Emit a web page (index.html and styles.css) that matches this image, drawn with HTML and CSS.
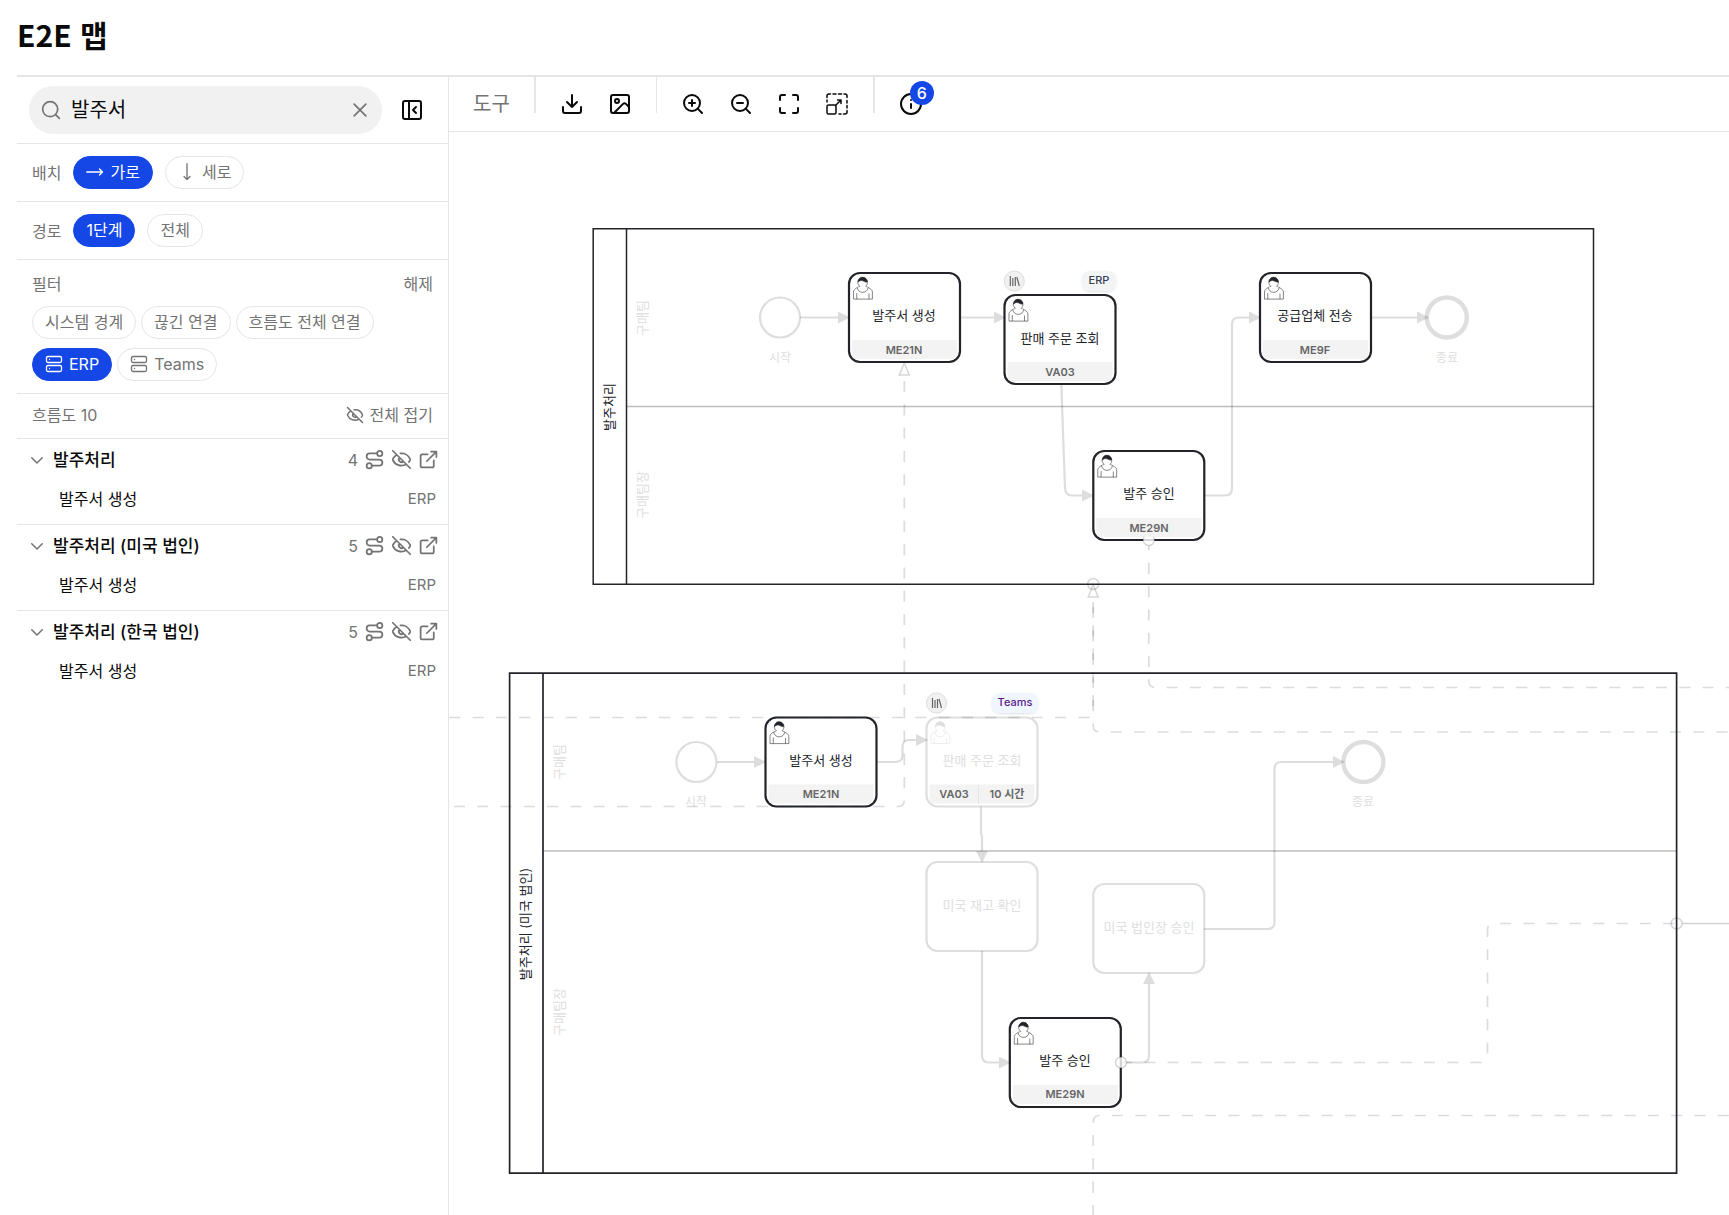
FILE: index.html
```html
<!DOCTYPE html>
<html lang="ko">
<head>
<meta charset="utf-8">
<title>E2E 맵</title>
<meta name="viewport" content="width=device-width, initial-scale=1">
<link rel="stylesheet" href="styles.css">
</head>
<body>
<svg class="sprite" aria-hidden="true">
  <symbol id="i-search" viewBox="0 0 24 24"><circle cx="11" cy="11" r="9"/><path d="m22 22-4.500-4.500"/></symbol>
  <symbol id="i-x" viewBox="0 0 24 24"><path d="M19 5 5 19M5 5l14 14"/></symbol>
  <symbol id="i-panel" viewBox="0 0 24 24"><rect x="3" y="3" width="18" height="18" rx="2"/><path d="M9 3v18M16 15l-3-3 3-3"/></symbol>
  <symbol id="i-right" viewBox="0 0 24 24"><path d="m18 8 4 4-4 4M1 12h21"/></symbol>
  <symbol id="i-down" viewBox="0 0 24 24"><path d="m8 18 4 4 4-4M12 1v21"/></symbol>
  <symbol id="i-server" viewBox="0 0 24 24"><rect x="2" y="2" width="20" height="8" rx="2"/><rect x="2" y="14" width="20" height="8" rx="2"/><path d="M6 6h.01M6 18h.01"/></symbol>
  <symbol id="i-eyeoff" viewBox="0 0 24 24"><path d="M10.733 5.076a10.744 10.744 0 0 1 11.205 6.575 1 1 0 0 1 0 .696 10.747 10.747 0 0 1-1.444 2.49M14.084 14.158a3 3 0 0 1-4.242-4.242M17.479 17.499a10.75 10.75 0 0 1-15.417-5.151 1 1 0 0 1 0-.696 10.75 10.75 0 0 1 4.446-5.143M2 2l20 20"/></symbol>
  <symbol id="i-route" viewBox="0 0 24 24"><circle cx="6" cy="19" r="3"/><path d="M9 19h8.500a3.500 3.500 0 0 0 0-7h-11a3.500 3.500 0 0 1 0-7H15"/><circle cx="18" cy="5" r="3"/></symbol>
  <symbol id="i-external" viewBox="0 0 24 24"><path d="M15 3h6v6M10 14 21 3M18 13v6a2 2 0 0 1-2 2H5a2 2 0 0 1-2-2V8a2 2 0 0 1 2-2h6"/></symbol>
  <symbol id="i-chevron" viewBox="0 0 24 24"><path d="m5 9 7 7 7-7"/></symbol>
  <symbol id="i-download" viewBox="0 0 24 24"><path d="M12 15V3M21 15v4a2 2 0 0 1-2 2H5a2 2 0 0 1-2-2v-4M7 10l5 5 5-5"/></symbol>
  <symbol id="i-image" viewBox="0 0 24 24"><rect x="3" y="3" width="18" height="18" rx="2"/><circle cx="9" cy="9" r="2"/><path d="m21 15-3.086-3.086a2 2 0 0 0-2.828 0L6 21"/></symbol>
  <symbol id="i-zoomin" viewBox="0 0 24 24"><circle cx="11" cy="11" r="8"/><path d="m21 21-4.350-4.350M11 8v6M8 11h6"/></symbol>
  <symbol id="i-zoomout" viewBox="0 0 24 24"><circle cx="11" cy="11" r="8"/><path d="m21 21-4.350-4.350M8 11h6"/></symbol>
  <symbol id="i-max" viewBox="0 0 24 24"><path d="M8 3H5a2 2 0 0 0-2 2v3M21 8V5a2 2 0 0 0-2-2h-3M3 16v3a2 2 0 0 0 2 2h3M16 21h3a2 2 0 0 0 2-2v-3"/></symbol>
  <symbol id="i-scale" viewBox="0 0 24 24"><rect x="2" y="13" width="9" height="9" rx="1.500"/><path d="M10.500 13.500 16 8M12.500 8H16v3.500M2 10V8M2 5.500V4a2 2 0 0 1 2-2h1.500M8 2h3M13.500 2h3M19 2h1a2 2 0 0 1 2 2v1.500M22 8.500v2.500M22 13.500v2.500M22 18.500V20a2 2 0 0 1-2 2h-1.500M14 22h2"/></symbol>
  <symbol id="i-info" viewBox="0 0 24 24"><circle cx="12" cy="12" r="10"/><path d="M12 16v-4M12 8h.01"/></symbol>
  <g id="user">
    <g transform="scale(1.111)">
      <path class="user-line" d="m15 12c.909-.845 1.594-2.049 1.594-3.385 0-2.554-1.805-4.622-4.357-4.622-2.552 0-4.288 2.068-4.288 4.622 0 1.348.974 2.562 1.896 3.405-.529.187-5.669 2.097-5.794 4.756v6.718h17v-6.718c0-2.298-5.528-4.595-6.051-4.776zm-8 6v5.500m11 0v-5"/>
      <path class="user-line" d="m17.162 13.009c0 2.447-2.158 4.431-4.821 4.431-2.665 0-4.822-1.981-4.822-4.431"/>
      <path class="user-hair" d="m8.100 8.200c0 0 2.251-2.358 4.274-1.177 2.024 1.181 4.221 1.537 4.124.965-.098-.57-.117-3.791-4.191-4.136-3.572-.22-4.207 3.658-4.207 4.348z"/>
    </g>
  </g>
  <g id="task">
    <rect class="task-box" width="111" height="89" rx="11"/>
    <use href="#user"/>
    <path class="task-foot" d="M3 67h105v14q0 5-5 5H8q-5 0-5-5z"/>
  </g>
  <g id="library">
    <circle class="lib-bg" r="10"/>
    <path class="lib-mark" d="M-4-5V5M-1.500-3V5M1-4V5M2.500-4 5 5"/>
  </g>
  <path id="msg-head" class="msg-mark" d="M0 0 5 12H-5z"/>
</svg>

<header class="page-header"><h1>E2E 맵</h1></header>

<div class="workspace">
  <aside class="sidebar">
    <div class="search-row">
      <label class="search">
        <svg class="icon icon-md"><use href="#i-search"/></svg>
        <input type="text" value="발주서" aria-label="검색">
        <button type="button" class="plain" aria-label="지우기"><svg class="icon icon-md"><use href="#i-x"/></svg></button>
      </label>
      <button type="button" class="icon-btn" aria-label="패널 접기"><svg class="icon icon-lg"><use href="#i-panel"/></svg></button>
    </div>

    <div class="option-row">
      <span class="label">배치</span>
      <button type="button" class="chip on"><svg class="icon icon-sm"><use href="#i-right"/></svg>가로</button>
      <button type="button" class="chip"><svg class="icon icon-sm"><use href="#i-down"/></svg>세로</button>
    </div>
    <div class="option-row">
      <span class="label">경로</span>
      <button type="button" class="chip on">1단계</button>
      <button type="button" class="chip">전체</button>
    </div>

    <div class="filters">
      <div class="filter-head"><span>필터</span><button type="button" class="plain">해제</button></div>
      <div class="chips">
        <button type="button" class="chip">시스템 경계</button>
        <button type="button" class="chip">끊긴 연결</button>
        <button type="button" class="chip">흐름도 전체 연결</button>
        <button type="button" class="chip on"><svg class="icon icon-sm"><use href="#i-server"/></svg>ERP</button>
        <button type="button" class="chip"><svg class="icon icon-sm"><use href="#i-server"/></svg>Teams</button>
      </div>
    </div>

    <div class="count-row">
      <span>흐름도 10</span>
      <button type="button" class="plain"><svg class="icon icon-sm"><use href="#i-eyeoff"/></svg>전체 접기</button>
    </div>

    <ul class="flows">
      <li>
        <div class="flow-head">
          <button type="button" class="flow-name"><svg class="icon icon-sm"><use href="#i-chevron"/></svg>발주처리</button>
          <span>4</span>
          <button type="button" class="plain" aria-label="경로"><svg class="icon icon-act"><use href="#i-route"/></svg></button>
          <button type="button" class="plain" aria-label="숨기기"><svg class="icon icon-act"><use href="#i-eyeoff"/></svg></button>
          <button type="button" class="plain" aria-label="열기"><svg class="icon icon-act"><use href="#i-external"/></svg></button>
        </div>
        <button type="button" class="flow-item">발주서 생성<span>ERP</span></button>
      </li>
      <li>
        <div class="flow-head">
          <button type="button" class="flow-name"><svg class="icon icon-sm"><use href="#i-chevron"/></svg>발주처리 (미국 법인)</button>
          <span>5</span>
          <button type="button" class="plain" aria-label="경로"><svg class="icon icon-act"><use href="#i-route"/></svg></button>
          <button type="button" class="plain" aria-label="숨기기"><svg class="icon icon-act"><use href="#i-eyeoff"/></svg></button>
          <button type="button" class="plain" aria-label="열기"><svg class="icon icon-act"><use href="#i-external"/></svg></button>
        </div>
        <button type="button" class="flow-item">발주서 생성<span>ERP</span></button>
      </li>
      <li>
        <div class="flow-head">
          <button type="button" class="flow-name"><svg class="icon icon-sm"><use href="#i-chevron"/></svg>발주처리 (한국 법인)</button>
          <span>5</span>
          <button type="button" class="plain" aria-label="경로"><svg class="icon icon-act"><use href="#i-route"/></svg></button>
          <button type="button" class="plain" aria-label="숨기기"><svg class="icon icon-act"><use href="#i-eyeoff"/></svg></button>
          <button type="button" class="plain" aria-label="열기"><svg class="icon icon-act"><use href="#i-external"/></svg></button>
        </div>
        <button type="button" class="flow-item">발주서 생성<span>ERP</span></button>
      </li>
    </ul>
  </aside>

  <main class="stage">
    <div class="toolbar">
      <span class="toolbar-label">도구</span>
      <span class="divider strong"></span>
      <button type="button" class="icon-btn" aria-label="다운로드"><svg class="icon icon-lg"><use href="#i-download"/></svg></button>
      <button type="button" class="icon-btn" aria-label="이미지"><svg class="icon icon-lg"><use href="#i-image"/></svg></button>
      <span class="divider"></span>
      <button type="button" class="icon-btn" aria-label="확대"><svg class="icon icon-lg"><use href="#i-zoomin"/></svg></button>
      <button type="button" class="icon-btn" aria-label="축소"><svg class="icon icon-lg"><use href="#i-zoomout"/></svg></button>
      <button type="button" class="icon-btn" aria-label="전체 화면"><svg class="icon icon-lg"><use href="#i-max"/></svg></button>
      <button type="button" class="icon-btn" aria-label="화면에 맞춤"><svg class="icon icon-lg thin"><use href="#i-scale"/></svg></button>
      <span class="divider strong"></span>
      <button type="button" class="icon-btn" aria-label="정보"><svg class="icon icon-lg"><use href="#i-info"/></svg><span class="badge">6</span></button>
    </div>

    <svg class="canvas" role="img" aria-label="프로세스 흐름도">
      <defs>
        <marker id="arrow" viewBox="0 0 12 12" refX="11" refY="6" markerWidth="12" markerHeight="12" markerUnits="userSpaceOnUse" orient="auto"><path d="M0 0 12 6 0 12z" fill="#22242a"/></marker>
        <filter id="shadow" x="-20%" y="-20%" width="140%" height="150%"><feDropShadow dx="0" dy="1" stdDeviation="1" flood-opacity=".12"/></filter>
      </defs>
      <g transform="translate(-449 -132)">

        <!-- pool: 발주처리 -->
        <path class="lane" d="M627 406.500H1593"/>
        <path class="pool thin-pool" d="M593.200 228.700H1593.500V584.200H593.200zM626.500 228.700V584.200"/>
        <text class="t pool-name" transform="translate(614 407) rotate(-90)">발주처리</text>
        <text class="t dim" transform="translate(647 318) rotate(-90)">구매팀</text>
        <text class="t dim" transform="translate(647 495) rotate(-90)">구매팀장</text>

        <!-- pool: 발주처리 (미국 법인) -->
        <path class="lane" d="M543 851H1676"/>
        <path class="pool" d="M509.600 673.200H1676.600V1173.200H509.600zM543 673.200V1173.200"/>
        <text class="t pool-name" transform="translate(530 924) rotate(-90)">발주처리 (미국 법인)</text>
        <text class="t dim" transform="translate(564 762) rotate(-90)">구매팀</text>
        <text class="t dim" transform="translate(564 1012) rotate(-90)">구매팀장</text>

        <!-- events -->
        <circle class="event" cx="780" cy="317.500" r="20"/>
        <circle class="event end" cx="1446.800" cy="317.500" r="20"/>
        <circle class="event" cx="696.400" cy="762" r="20"/>
        <circle class="event end" cx="1363.400" cy="762" r="20"/>
        <text class="t small dim" x="780" y="362">시작</text>
        <text class="t small dim" x="1447" y="362">종료</text>
        <text class="t small dim" x="696" y="806">시작</text>
        <text class="t small dim" x="1363" y="806">종료</text>

        <!-- tasks -->
        <use href="#task" x="849" y="273"/>
        <text class="t" x="904" y="320">발주서 생성</text><text class="t code" x="904" y="354">ME21N</text>
        <use href="#task" x="1004.500" y="295"/>
        <text class="t" x="1060" y="343">판매 주문 조회</text><text class="t code" x="1060" y="376">VA03</text>
        <use href="#task" x="1093.300" y="451"/>
        <text class="t" x="1149" y="498">발주 승인</text><text class="t code" x="1149" y="532">ME29N</text>
        <use href="#task" x="1260" y="273"/>
        <text class="t" x="1315" y="320">공급업체 전송</text><text class="t code" x="1315" y="354">ME9F</text>
        <use href="#task" x="765.500" y="717.500"/>
        <text class="t" x="821" y="765">발주서 생성</text><text class="t code" x="821" y="798">ME21N</text>
        <use href="#task" x="1009.800" y="1018"/>
        <text class="t" x="1065" y="1065">발주 승인</text><text class="t code" x="1065" y="1098">ME29N</text>

        <g class="faded">
          <use href="#task" x="926.500" y="717.500"/>
          <rect class="task-box" x="926.500" y="862" width="111" height="89" rx="11"/>
          <rect class="task-box" x="1093.300" y="884" width="111" height="89" rx="11"/>
        </g>
        <path class="foot-split" d="M978.500 785v19"/>
        <text class="t dim" x="982" y="765">판매 주문 조회</text>
        <text class="t code" x="954" y="798">VA03</text><text class="t code" x="1007" y="798">10 시간</text>
        <text class="t dim" x="982" y="910">미국 재고 확인</text>
        <text class="t dim" x="1149" y="932">미국 법인장 승인</text>

        <!-- badges -->
        <use href="#library" x="1014.300" y="281"/>
        <rect class="tag" x="1082" y="271" width="34" height="20" rx="8"/><text class="t tag-text" x="1099" y="284">ERP</text>
        <use href="#library" x="936.500" y="703"/>
        <rect class="tag teams" x="992" y="693" width="46" height="20" rx="8"/><text class="t tag-text teams-text" x="1015" y="706">Teams</text>

        <!-- sequence flows -->
        <g class="seq">
          <path d="M800 317.500H849"/>
          <path d="M960 317.500H1005"/>
          <path d="M1061.300 384 1065 488q.500 7.500 7 7.500H1093"/>
          <path d="M1205 495.500h20q7 0 7-7V324.500q0-7 7-7H1260"/>
          <path d="M1371 317.500H1428"/>
          <path d="M717 762H765"/>
          <path d="M876.500 762H895.500q7 0 7-7V747q0-7 7-7H927"/>
          <path d="M981 806.500V834L982 836V862"/>
          <path d="M982 951V1055.500q0 7 7 7H1010"/>
          <path d="M1121 1062.500h21q7 0 7-7V973"/>
          <path d="M1204 929h63.500q7 0 7-7V769q0-7 7-7H1344"/>
        </g>

        <!-- message flows -->
        <g class="msg">
          <path d="M904.300 381V800q0 6.500-6.500 6.500H449"/>
          <path d="M1093.200 602V711q0 6.500-6.500 6.500H449"/>
          <path d="M1093.200 607V725.500q0 6.500 6.500 6.500H2600"/>
          <path d="M1148.800 539.500V681q0 6.500 6.500 6.500H2600"/>
          <path d="M1121 1062.500H1481q6.500 0 6.500-6.500V930q0-6.500 6.500-6.500H1676"/>
          <path d="M1093.200 1216V1122q0-6.500 6.500-6.500H2600"/>
        </g>
        <path class="msg-solid" d="M1682 923.500H2600"/>
        <use href="#msg-head" x="904.300" y="363"/>
        <use href="#msg-head" x="1093.200" y="585"/>
        <circle class="msg-mark" cx="1093.200" cy="584" r="5.500"/>
        <path class="msg-mark cover" d="M1144.200 537a5.500 5.500 0 1 0 9.200 0"/>
        <circle class="msg-mark cover" cx="1121" cy="1062.500" r="5.500"/>
        <circle class="msg-mark" cx="1676.600" cy="923.500" r="5.500"/>
      </g>
    </svg>
  </main>
</div>
</body>
</html>
```
FILE: styles.css
```css
:root {
  --line: #e5e5e5;
  --muted: #737373;
  --ink: #0a0a0a;
  --blue: #1447e6;
  --shape: #22242a;
}

* { box-sizing: border-box; }

body {
  margin: 0;
  min-height: 100vh;
  display: flex;
  flex-direction: column;
  background: #fff;
  color: var(--ink);
  font: 16px/24px Inter, "Noto Sans CJK KR", sans-serif;
}

button {
  font: inherit;
  color: inherit;
  background: none;
  border: 0;
  padding: 0;
  cursor: pointer;
}

.sprite { position: absolute; width: 0; height: 0; }

.page-header {
  margin-left: 17px;
  padding: 14px 0 21px;
  border-bottom: 2px solid var(--line);
}

h1 {
  margin: 0;
  font: 700 30px/40px "Noto Sans CJK KR", sans-serif;
}

.workspace { flex: 1; display: flex; margin-left: 17px; }

.sidebar {
  flex: 0 0 432px;
  min-width: 0;
  border-right: 1px solid var(--line);
  color: var(--muted);
}

.icon {
  display: block;
  flex: none;
  fill: none;
  stroke: currentColor;
  stroke-width: 2;
  stroke-linecap: round;
  stroke-linejoin: round;
}
.icon-sm { width: 18px; height: 18px; }
.icon-md { width: 20px; height: 20px; }
.icon-act { width: 21px; height: 21px; }
.icon-lg { width: 24px; height: 24px; }
.thin { stroke-width: 1.5; }

.search-row {
  display: flex;
  align-items: center;
  gap: 6px;
  padding: 9px 12px;
  border-bottom: 1px solid var(--line);
}
.search {
  flex: 1;
  min-width: 0;
  height: 48px;
  display: flex;
  align-items: center;
  gap: 10px;
  padding: 0 12px;
  border-radius: 24px;
  background: #f1f1f1;
}
.search input {
  flex: 1;
  width: 100%;
  min-width: 0;
  border: 0;
  padding: 0;
  outline: 0;
  background: none;
  color: var(--ink);
  font: 20px/28px Inter, "Noto Sans CJK KR", sans-serif;
}

.icon-btn {
  position: relative;
  flex: none;
  width: 48px;
  height: 48px;
  display: flex;
  align-items: center;
  justify-content: center;
  color: var(--ink);
}

.option-row {
  display: flex;
  align-items: center;
  gap: 12px;
  padding: 12px 15px;
  border-bottom: 1px solid var(--line);
}

.chip {
  height: 33px;
  display: flex;
  align-items: center;
  gap: 6px;
  padding: 0 12px 1px;
  border: 1px solid var(--line);
  border-radius: 17px;
  background: #fff;
}
.chip .icon { stroke-width: 1.75; }
.chip.on { background: var(--blue); border-color: var(--blue); color: #fff; }

.filters { padding: 12px 15px; border-bottom: 1px solid var(--line); }
.filter-head { display: flex; justify-content: space-between; margin-bottom: 10px; }
.chips { display: flex; flex-wrap: wrap; gap: 9px 5px; }

.count-row {
  display: flex;
  justify-content: space-between;
  padding: 9px 15px 11px;
  border-bottom: 1px solid var(--line);
}
.plain { display: flex; align-items: center; gap: 6px; }

.flows { list-style: none; margin: 0; padding: 0; }
.flows li { padding-bottom: 6px; }
.flows li + li { border-top: 1px solid var(--line); }
.flow-head {
  display: flex;
  align-items: center;
  gap: 6px;
  height: 41px;
  padding: 0 9px 0 11px;
}
.flow-name {
  flex: 1;
  display: flex;
  align-items: center;
  gap: 7px;
  color: var(--ink);
  font-size: 17px;
  font-weight: 500;
}
.flow-name .icon { color: var(--muted); }
.flow-item {
  width: 100%;
  height: 38px;
  display: flex;
  align-items: center;
  justify-content: space-between;
  padding: 0 12px 0 42px;
  color: var(--ink);
}
.flow-item span { color: var(--muted); font-size: 15px; }

.stage { flex: 1; min-width: 0; display: flex; flex-direction: column; }

.toolbar {
  height: 55px;
  display: flex;
  align-items: center;
  padding-left: 12px;
  border-bottom: 1px solid var(--line);
}
.toolbar-label { padding: 0 12px; color: var(--muted); font-size: 20px; }
.divider {
  align-self: flex-start;
  width: 1px;
  height: 36px;
  margin: 0 12px;
  background: var(--line);
}
.strong { width: 2px; }
.badge {
  position: absolute;
  top: 1px;
  right: 1px;
  width: 24px;
  height: 24px;
  border-radius: 50%;
  background: var(--blue);
  color: #fff;
  font-weight: 500;
  line-height: 24px;
  text-align: center;
}

/* diagram */
.canvas { flex: 1; width: 100%; min-height: 0; display: block; overflow: hidden; }

.pool { fill: none; stroke: var(--shape); stroke-width: 1.7; }
.thin-pool { stroke-width: 1.5; }
.lane { stroke: #bdbdbf; stroke-width: 1.7; }
.event { fill: #fff; stroke: #dedede; stroke-width: 2.2; }
.event.end { stroke-width: 4.4; }

.task-box { fill: #fff; stroke: var(--shape); stroke-width: 2.2; }
.task-foot { fill: #f3f3f3; }
.user-line { fill: #fff; stroke: var(--shape); stroke-width: .5; }
.user-hair { fill: var(--shape); stroke: var(--shape); stroke-width: .5; }
.faded { --shape: #dedede; }
.foot-split { stroke: #e5e5e5; }

.t { font-size: 13px; fill: var(--shape); text-anchor: middle; }
.t.pool-name { fill: #22242a; }
.t.small { font-size: 12px; }
.t.dim { fill: #dedede; }
.t.code { font-size: 11px; font-weight: 600; fill: #666; }

.lib-bg { fill: #f1f1f1; stroke: #ddd; }
.lib-mark { fill: none; stroke: #666; stroke-width: 1.2; }
.tag { fill: #f3f4f6; filter: url(#shadow); }
.tag.teams { fill: #eff6ff; }
.t.tag-text { font-size: 11px; font-weight: 500; fill: #364153; }
.t.teams-text { fill: #59168b; }

.seq path {
  fill: none;
  stroke: #22242a;
  stroke-width: 2.2;
  opacity: .15;
  marker-end: url(#arrow);
}
.seq { stroke-linejoin: round; }
.msg path {
  fill: none;
  stroke: #22242a;
  stroke-opacity: .16;
  stroke-width: 1.7;
  stroke-dasharray: 11.1 12.2;
}
.msg-solid { fill: none; stroke: #22242a; stroke-opacity: .2; stroke-width: 1.7; }
.msg-mark { fill: none; stroke: #22242a; stroke-opacity: .18; stroke-width: 1.5; }
.msg-mark.cover { fill: #fff; fill-opacity: .8; }
```
